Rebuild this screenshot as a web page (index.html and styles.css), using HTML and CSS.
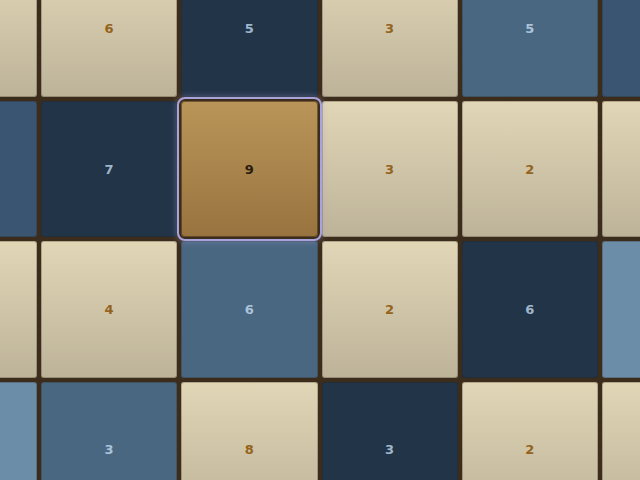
FILE: index.html
```html
<!DOCTYPE html>
<html>
<head>
<meta charset="utf-8">
<link rel="stylesheet" href="styles.css">
</head>
<body>
<div class="board">
  <div class="tile sand"></div>
  <div class="tile sand">6</div>
  <div class="tile navy">5</div>
  <div class="tile sand">3</div>
  <div class="tile blue">5</div>
  <div class="tile steel"></div>

  <div class="tile steel"></div>
  <div class="tile navy">7</div>
  <div class="tile gold selected">9</div>
  <div class="tile sand">3</div>
  <div class="tile sand">2</div>
  <div class="tile sand"></div>

  <div class="tile sand"></div>
  <div class="tile sand">4</div>
  <div class="tile blue">6</div>
  <div class="tile sand">2</div>
  <div class="tile navy">6</div>
  <div class="tile sky"></div>

  <div class="tile sky"></div>
  <div class="tile blue">3</div>
  <div class="tile sand">8</div>
  <div class="tile navy">3</div>
  <div class="tile sand">2</div>
  <div class="tile sand"></div>
</div>
</body>
</html>
```
FILE: styles.css
```css
html, body {
  margin: 0;
  padding: 0;
  width: 640px;
  height: 480px;
  overflow: hidden;
  background: #3b2c1b;
}
.board {
  display: grid;
  grid-template-columns: repeat(6, 136.25px);
  grid-auto-rows: 136.25px;
  gap: 4px;
  margin-left: -99.25px;
  margin-top: -39.25px;
}
.tile {
  border-radius: 3px;
  display: flex;
  align-items: center;
  justify-content: center;
  font-family: "DejaVu Sans", "Liberation Sans", sans-serif;
  font-weight: bold;
  font-size: 13px;
  box-shadow: inset 0 0 0 1px rgba(40, 28, 14, 0.25);
}
.sand {
  background: linear-gradient(#e1d6b6, #bdb399);
  color: #94631c;
}
.navy {
  background: #223447;
  color: #9fb6cc;
}
.blue {
  background: #4a6781;
  color: #aac3da;
}
.steel {
  background: #3a5572;
  color: #aac3da;
}
.sky {
  background: #6b8da8;
  color: #dde8f2;
}
.gold {
  background: linear-gradient(#ba9559, #98733f);
  color: #2a1d0e;
}
.selected {
  position: relative;
  z-index: 1;
  border-radius: 4px;
  outline: 2px solid #a8a3dc;
  outline-offset: 2px;
  box-shadow: inset 0 0 0 1px rgba(40, 28, 14, 0.5), 0 0 0 2px #3b2c1b, 0 0 6px 5px rgba(168, 163, 220, 0.35);
}
```
